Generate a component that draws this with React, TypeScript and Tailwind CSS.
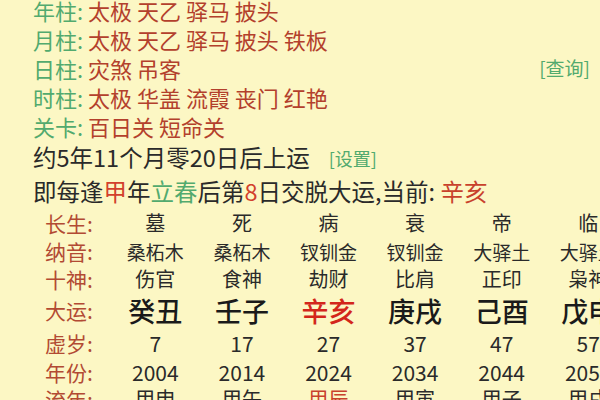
import React from "react";

const FONT = { fontFamily: '"Noto Sans CJK SC", "Noto Sans", sans-serif' };

const top: { label: string; vals: string; right?: string }[] = [
  { label: "年柱", vals: "太极 天乙 驿马 披头" },
  { label: "月柱", vals: "太极 天乙 驿马 披头 铁板" },
  { label: "日柱", vals: "灾煞 吊客", right: "[查询]" },
  { label: "时柱", vals: "太极 华盖 流霞 丧门 红艳" },
  { label: "关卡", vals: "百日关 短命关" },
];

const cols = [
  { cs: "墓", ny: "桑柘木", ss: "伤官", dy: "癸丑", age: "7", yr: "2004", ln: "甲申" },
  { cs: "死", ny: "桑柘木", ss: "食神", dy: "壬子", age: "17", yr: "2014", ln: "甲午" },
  { cs: "病", ny: "钗钏金", ss: "劫财", dy: "辛亥", age: "27", yr: "2024", ln: "甲辰", cur: true },
  { cs: "衰", ny: "钗钏金", ss: "比肩", dy: "庚戌", age: "37", yr: "2034", ln: "甲寅" },
  { cs: "帝", ny: "大驿土", ss: "正印", dy: "己酉", age: "47", yr: "2044", ln: "甲子" },
  { cs: "临", ny: "大驿土", ss: "枭神", dy: "戊申", age: "57", yr: "2054", ln: "甲戌" },
];

function Row({
  label,
  h,
  children,
}: {
  label: string;
  h: string;
  children: React.ReactNode;
}) {
  return (
    <>
      <div className={`flex items-center text-[21px] leading-none text-[#b24a33] ${h}`}>{label}:</div>
      {children}
    </>
  );
}

const cell = "flex items-center justify-center leading-none";

export default function App() {
  return (
    <div
      className="w-[600px] h-[400px] overflow-hidden bg-[#fcf7c4] text-[#2a2a2a]"
      style={FONT}
    >
      <div className="mt-[-5px] pl-[33px] pr-[10px]">
        {top.map((r) => (
          <div key={r.label} className="flex items-center justify-between h-[29px] text-[22px] leading-none">
            <div className="whitespace-pre">
              <span className="text-[#52aa6e]">{r.label}:</span>
              <span className="text-[#b3402c]"> {r.vals}</span>
            </div>
            {r.right && <span className="text-[19px] text-[#52aa6e]">{r.right}</span>}
          </div>
        ))}
        <div className="flex items-center h-[34px] text-[23.5px] leading-none mt-[1px]">
          <span>约5年11个月零20日后上运</span>
          <span className="ml-[19px] text-[18px] text-[#52aa6e]">[设置]</span>
        </div>
        <div className="flex items-center h-[34px] text-[23.5px] leading-none whitespace-pre">
          <span>
            即每逢<span className="text-[#d2402c]">甲</span>年
            <span className="text-[#52aa6e]">立春</span>后第
            <span className="text-[#d2402c]">8</span>日交脱大运,当前: <span className="text-[#c8412c]">辛亥</span>
          </span>
        </div>
      </div>
      <div className="pl-[45px] grid grid-cols-[67px_repeat(6,86.6px)] text-center">
        <Row label="长生" h="h-[28px]">
          {cols.map((c, i) => (
            <div key={i} className={`${cell} text-[20px]`}>{c.cs}</div>
          ))}
        </Row>
        <Row label="纳音" h="h-[28px]">
          {cols.map((c, i) => (
            <div key={i} className={`${cell} text-[19px]`}>{c.ny}</div>
          ))}
        </Row>
        <Row label="十神" h="h-[28px]">
          {cols.map((c, i) => (
            <div key={i} className={`${cell} text-[20px]`}>{c.ss}</div>
          ))}
        </Row>
        <Row label="大运" h="h-[35px]">
          {cols.map((c, i) => (
            <div
              key={i}
              className={`${cell} text-[27px] font-medium ${c.cur ? "text-[#d3261b]" : "text-[#1a1a1a]"}`}
            >
              {c.dy}
            </div>
          ))}
        </Row>
        <Row label="虚岁" h="h-[31px]">
          {cols.map((c, i) => (
            <div key={i} className={`${cell} text-[21px]`}>{c.age}</div>
          ))}
        </Row>
        <Row label="年份" h="h-[26px]">
          {cols.map((c, i) => (
            <div key={i} className={`${cell} text-[21px]`}>{c.yr}</div>
          ))}
        </Row>
        <Row label="流年" h="h-[28px]">
          {cols.map((c, i) => (
            <div
              key={i}
              className={`${cell} text-[20px] ${c.cur ? "text-[#c8412c]" : ""}`}
            >
              {c.ln}
            </div>
          ))}
        </Row>
      </div>
    </div>
  );
}
